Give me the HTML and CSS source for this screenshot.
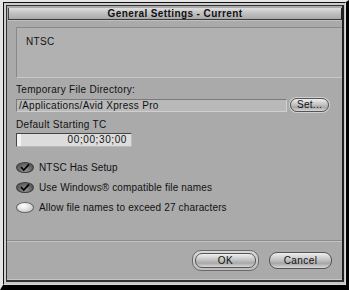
FILE: index.html
```html
<!DOCTYPE html>
<html lang="en">
<head>
  <meta charset="UTF-8" />
  <meta name="viewport" content="width=device-width, initial-scale=1" />
  <title>General Settings - Current</title>
  <link rel="stylesheet" href="styles.css">
</head>
<body>

<div class="window">
  <div class="frame">
    <div class="frame-inner">
      <div class="dialog">
        <div class="titlebar">General Settings - Current</div>

        <div class="content">
          <div class="format-panel">NTSC</div>

          <div class="field-label">Temporary File Directory:</div>
          <div class="dir-row">
            <div class="text-field">/Applications/Avid Xpress Pro</div>
            <button class="btn btn-set">Set...</button>
          </div>

          <div class="field-label label-tc">Default Starting TC</div>
          <div class="tc-field">00;00;30;00</div>

          <ul class="options">
            <li>
              <span class="check checked">
                <svg width="18" height="11" viewBox="0 0 18 11"><path d="M5 5.2 L7.8 8 L13 2.4" /></svg>
              </span>
              NTSC Has Setup
            </li>
            <li>
              <span class="check checked">
                <svg width="18" height="11" viewBox="0 0 18 11"><path d="M5 5.2 L7.8 8 L13 2.4" /></svg>
              </span>
              Use Windows® compatible file names
            </li>
            <li>
              <span class="check"></span>
              Allow file names to exceed 27 characters
            </li>
          </ul>
        </div>

        <div class="footer">
          <div class="default-ring">
            <button class="btn btn-ok">OK</button>
          </div>
          <button class="btn btn-cancel">Cancel</button>
        </div>
      </div>
    </div>
  </div>
</div>

</body>
</html>
```

FILE: styles.css
```css
html, body {
  margin: 0;
  padding: 0;
  background: #000;
}
body {
  font-family: "Liberation Sans", Arial, sans-serif;
  font-size: 10px;
  color: #111;
}
.window {
  width: 349px;
  height: 290px;
  box-sizing: border-box;
  border-top: 2px solid #e6e6e6;
  border-left: 3px solid #e6e6e6;
  border-right: 3px solid #000;
  border-bottom: 5px solid #000;
  background: #000;
}
.frame {
  height: 100%;
  box-sizing: border-box;
  border-top: 1px solid #111;
  border-left: 1px solid #111;
  border-right: 1px solid #dcdcdc;
  border-bottom: 1px solid #d6d6d6;
}
.frame-inner {
  height: 100%;
  box-sizing: border-box;
  border-top: 2px solid #cdcdcd;
  border-left: 2px solid #cdcdcd;
  border-right: 1px solid #c4c4c4;
  border-bottom: 2px solid #c8c8c8;
}
.dialog {
  height: 100%;
  box-sizing: border-box;
  border-top: 1px solid #333;
  border-left: 1px solid #333;
  border-right: 2px solid #222;
  border-bottom: 2px solid #333;
  background: #aaaaaa;
  display: flex;
  flex-direction: column;
  box-shadow: inset 0 -1px 0 #c6c6c6;
}
.titlebar {
  margin: 2px 0 0 1px;
  height: 12px;
  box-sizing: border-box;
  border-left: 1px solid #444;
  border-right: 1px solid #222;
  border-bottom: 1px solid #3a3a3a;
  background: linear-gradient(#dedede, #c2c2c2 45%, #a9a9a9);
  font-weight: bold;
  font-size: 10px;
  letter-spacing: 0.4px;
  line-height: 11px;
  text-align: center;
  color: #111;
  box-shadow: 0 1px 0 #c0c0c0;
}
.content {
  flex: 1;
  padding-left: 9px;
}
.format-panel {
  margin-top: 7px;
  height: 51px;
  box-sizing: border-box;
  border-top: 1px solid #8a8a8a;
  border-left: 1px solid #8a8a8a;
  border-bottom: 1px solid #c8c8c8;
  background: #b1b1b1;
  padding: 8px 0 0 9px;
  font-size: 10px;
  letter-spacing: 0.3px;
  line-height: 12px;
}
.field-label {
  margin-top: 6px;
  line-height: 12px;
  letter-spacing: 0.3px;
}
.label-tc {
  margin-top: 7px;
}
.dir-row {
  margin-top: 2px;
  display: flex;
  align-items: center;
  gap: 3px;
  height: 14px;
}
.text-field {
  width: 271px;
  height: 13px;
  box-sizing: border-box;
  border-top: 1px solid #7a7a7a;
  border-left: 1px solid #7a7a7a;
  border-bottom: 1px solid #cfcfcf;
  border-right: 1px solid #cfcfcf;
  background: #b9b9b9;
  padding-left: 2px;
  line-height: 11px;
  letter-spacing: 0.3px;
}
.btn {
  font-family: "Liberation Sans", Arial, sans-serif;
  font-size: 10px;
  color: #111;
  padding: 0;
  margin: 0;
  box-sizing: border-box;
  border: 1px solid #555;
  background: linear-gradient(#eeeeee, #c4c4c4 45%, #a8a8a8 70%, #d8d8d8);
  cursor: pointer;
}
.btn-set {
  width: 39px;
  height: 14px;
  border-radius: 7px;
  line-height: 12px;
  letter-spacing: 0.3px;
  box-shadow: 0 0 0 1px #d0d0d0;
}
.tc-field {
  margin-top: 2px;
  width: 116px;
  height: 14px;
  box-sizing: border-box;
  border: 1px solid #444;
  border-right-color: #bbb;
  border-bottom-color: #bbb;
  background: linear-gradient(90deg, #f4f4f4 0 4px, #dcdcdc 4px);
  text-align: right;
  padding-right: 4px;
  line-height: 12px;
  font-size: 10px;
  letter-spacing: 0.6px;
}
.options {
  list-style: none;
  margin: 10px 0 0 0;
  padding: 0;
}
.options li {
  display: flex;
  align-items: center;
  height: 20px;
  gap: 5px;
  letter-spacing: 0.15px;
}
.check {
  width: 18px;
  height: 11px;
  box-sizing: border-box;
  border-radius: 50%;
  border: 1px solid #666;
  background: radial-gradient(ellipse at 40% 30%, #ffffff, #e2e2e2 45%, #b8b8b8);
  position: relative;
  flex: none;
}
.check.checked {
  border-color: #3a3a3a;
  background: radial-gradient(ellipse at 50% 75%, #9a9a9a, #6a6a6a 50%, #4a4a4a);
}
.check svg {
  position: absolute;
  left: -1px;
  top: -1px;
}
.check path {
  fill: none;
  stroke: #000;
  stroke-width: 1.7;
}
.footer {
  height: 40px;
  box-sizing: border-box;
  border-top: 1px solid #8c8c8c;
  box-shadow: inset 0 1px 0 #c4c4c4;
  padding: 9px 10px 0 0;
  display: flex;
  justify-content: flex-end;
  align-items: flex-start;
  gap: 10px;
}
.default-ring {
  width: 67px;
  height: 21px;
  box-sizing: border-box;
  border: 1px solid #6a6a6a;
  border-radius: 9px;
  background: linear-gradient(#dadada, #bdbdbd);
  display: flex;
  align-items: center;
  justify-content: center;
}
.btn-ok {
  width: 61px;
  height: 15px;
  border-radius: 7px;
  line-height: 13px;
  font-size: 10px;
  letter-spacing: 0.5px;
}
.btn-cancel {
  margin-top: 2px;
  width: 63px;
  height: 17px;
  border-radius: 8px;
  line-height: 15px;
  letter-spacing: 0.4px;
}
```
